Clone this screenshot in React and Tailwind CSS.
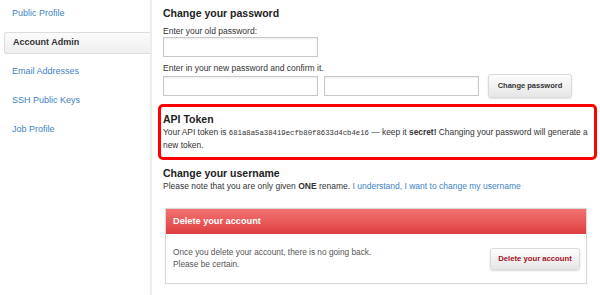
import React from 'react';

const navItems = ['Public Profile', 'Account Admin', 'Email Addresses', 'SSH Public Keys', 'Job Profile'];

function Sidebar() {
  return (
    <aside className="w-[150px] shrink-0 pt-[3px] flex flex-col gap-[7px]">
      {navItems.map((item) =>
        item === 'Account Admin' ? (
          <div
            key={item}
            className="ml-[4px] -mr-[2px] h-[22px] flex items-center pl-[8px] rounded-l-[3px] border border-r-0 border-[#dcdcdc] bg-gradient-to-b from-[#fbfbfb] to-[#efefef] text-[9px] font-bold text-[#333]"
          >
            {item}
          </div>
        ) : (
          <a key={item} href="#" className="h-[22px] flex items-center pl-[12px] text-[9px] text-[#4183c4]">
            {item}
          </a>
        )
      )}
    </aside>
  );
}

function PasswordInput({ className = '' }) {
  return (
    <input
      type="password"
      className={`block w-[155px] h-[20px] border border-[#c8c8c8] bg-white shadow-[inset_0_1px_2px_rgba(0,0,0,0.08)] outline-none ${className}`}
    />
  );
}

export default function App() {
  return (
    <div className="w-[600px] h-[295px] overflow-hidden bg-white flex text-[#333]" style={{ fontFamily: '"Liberation Sans", Arial, sans-serif' }}>
      <Sidebar />
      <div className="w-[2px] shrink-0 bg-[#ececec]" />

      <main className="flex-1 pl-[11px] pt-[6px]">
        {/* Change password */}
        <h2 className="text-[10.5px] leading-[14px] font-bold text-[#222]">Change your password</h2>
        <label className="block mt-[5px] text-[8.5px] leading-[12px]">Enter your old password:</label>
        <PasswordInput />
        <label className="block mt-[5px] text-[8.5px] leading-[12px]">Enter in your new password and confirm it.</label>
        <div className="flex items-center h-[24px]">
          <PasswordInput />
          <PasswordInput className="ml-[6px]" />
          <button className="ml-[9px] w-[84px] h-[24px] rounded-[3px] border border-[#dadada] bg-gradient-to-b from-[#fdfdfd] to-[#e6e6e6] shadow-[0_1px_2px_rgba(0,0,0,0.12)] text-[7.5px] font-bold text-[#333]">
            Change password
          </button>
        </div>

        {/* API token */}
        <section className="mt-[6px] -ml-[5px] w-[439px] border-[3px] border-[#ff0000] rounded-[5px] pl-[2px] pt-[5px] pb-[6px]">
          <h2 className="text-[10.5px] leading-[14px] font-bold text-[#222]">API Token</h2>
          <p className="text-[8.4px] leading-[12px]">
            Your API token is{' '}
            <code className="text-[7.3px] leading-[12px] align-baseline" style={{ fontFamily: '"Liberation Mono", "Courier New", monospace' }}>
              681a8a5a38419ecfb80f8633d4cb4e16
            </code>{' '}
            — keep it <strong>secret!</strong> Changing your password will generate a new token.
          </p>
        </section>

        {/* Username */}
        <h2 className="mt-[6px] text-[10.5px] leading-[14px] font-bold text-[#222]">Change your username</h2>
        <p className="text-[8.5px] leading-[12px]">
          Please note that you are only given <strong>ONE</strong> rename.{' '}
          <a href="#" className="text-[#4183c4]">I understand, I want to change my username</a>
        </p>

        {/* Delete account */}
        <div className="mt-[16px] ml-[2px] w-[422px] border border-[#d8d8d8] bg-white shadow-[0_0_2px_rgba(0,0,0,0.08)]">
          <div className="h-[25px] flex items-center pl-[7px] bg-gradient-to-b from-[#f27272] to-[#de3d3f] text-white text-[9.2px] font-bold">
            Delete your account
          </div>
          <div className="h-[49px] flex items-center justify-between pl-[7px] pr-[6px]">
            <p className="text-[8.3px] leading-[11.5px] text-[#555]">
              Once you delete your account, there is no going back.
              <br />
              Please be certain.
            </p>
            <button className="w-[90px] h-[22px] rounded-[3px] border border-[#dadada] bg-gradient-to-b from-[#fdfdfd] to-[#e6e6e6] shadow-[0_1px_2px_rgba(0,0,0,0.15)] text-[7.7px] font-bold text-[#a3111e]">
              Delete your account
            </button>
          </div>
        </div>
      </main>
    </div>
  );
}
